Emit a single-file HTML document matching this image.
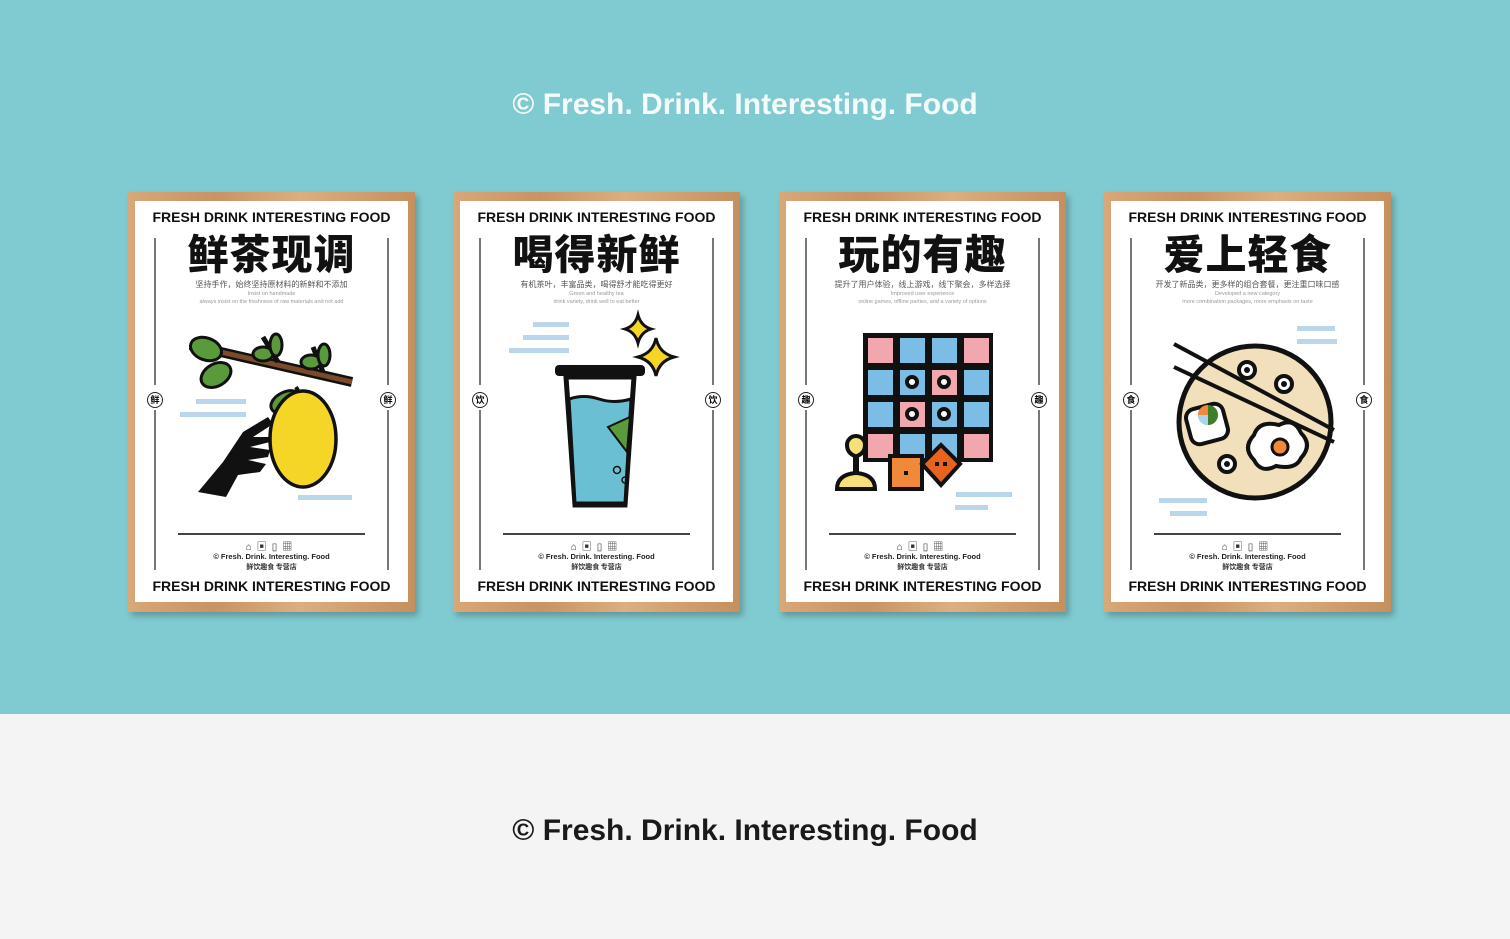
<!DOCTYPE html>
<html><head><meta charset="utf-8"><style>
*{margin:0;padding:0;box-sizing:border-box}
body{width:1510px;height:939px;overflow:hidden;background:#f4f4f4;font-family:"Liberation Sans","Noto Sans CJK SC",sans-serif;position:relative}
.top{position:absolute;left:0;top:0;width:1510px;height:714px;background:#80cbd1}
.h{position:absolute;left:0;width:1490px;text-align:center;font-size:30px;font-weight:bold;letter-spacing:0px}
.poster{position:absolute;top:192px;width:287px;height:420px;background:linear-gradient(90deg,#d9a878,#c99363 30%,#dcae80 60%,#c68f5e);box-shadow:3px 4px 6px rgba(0,0,0,.25)}
.in{position:absolute;left:7px;top:9px;right:7px;bottom:10px;background:#fff}
.poster>*{position:absolute}
.t{left:0;width:287px;text-align:center;font-weight:bold;font-size:14px;color:#111;white-space:nowrap}
.big{left:0;width:287px;text-align:center;font-weight:900;font-size:41px;line-height:48px;color:#111;top:35px;letter-spacing:1px;font-family:"Noto Sans CJK SC",sans-serif}
.s{left:0;width:287px;text-align:center;font-size:8px;color:#555;white-space:nowrap;font-family:"Noto Sans CJK SC",sans-serif}
.s2{left:0;width:287px;text-align:center;font-size:5.5px;color:#999;white-space:nowrap}
.vl{width:2px;background:#777}
.c{width:16px;height:16px;border:1.5px solid #222;border-radius:50%;font-size:9px;text-align:center;line-height:13px;font-weight:bold;font-family:"Noto Sans CJK SC",sans-serif;background:#fff}
.hl{height:1.5px;background:#444;left:50px;width:187px;top:341px}
.ic{left:0;width:287px;top:346px;text-align:center;font-size:10px;color:#333;letter-spacing:5px}
.f{left:0;width:287px;text-align:center;font-size:7.5px;font-weight:bold;top:360px;color:#222}
.f2{left:0;width:287px;text-align:center;font-size:7px;font-weight:bold;top:370px;color:#333;font-family:"Noto Sans CJK SC",sans-serif}
svg.il{left:0;top:0}
</style></head><body>
<div class="top"></div>
<div class="h" style="top:88px;color:#f4fbfb">© Fresh. Drink. Interesting. Food</div>
<div class="h" style="top:814px;color:#1a1a1a">© Fresh. Drink. Interesting. Food</div>

<div class="poster" style="left:128px">
<div class="in"></div>
<div class="t" style="top:17px">FRESH DRINK INTERESTING FOOD</div>
<div class="big">鲜茶现调</div>
<div class="s" style="top:87px">坚持手作，始终坚持原材料的新鲜和不添加</div>
<div class="s2" style="top:99px">Insist on handmade</div>
<div class="s2" style="top:107px">always insist on the freshness of raw materials and not add</div>
<div class="vl" style="left:26px;top:46px;height:147px"></div><div class="vl" style="left:26px;top:218px;height:160px"></div>
<div class="vl" style="left:259px;top:46px;height:147px"></div><div class="vl" style="left:259px;top:218px;height:160px"></div>
<div class="c" style="left:19px;top:200px">鲜</div><div class="c" style="left:252px;top:200px">鲜</div>
<svg class="il" width="287" height="420">
<line x1="62" y1="153" x2="224" y2="190" stroke="#111" stroke-width="10"/>
<line x1="62" y1="153" x2="224" y2="190" stroke="#7b4a28" stroke-width="5"/>
<line x1="135" y1="145" x2="150" y2="170" stroke="#111" stroke-width="5"/>
<line x1="185" y1="155" x2="195" y2="180" stroke="#111" stroke-width="5"/>
<g fill="#5b9a3a" stroke="#111" stroke-width="3">
<ellipse cx="78" cy="157" rx="16" ry="11" transform="rotate(20 78 157)"/>
<ellipse cx="88" cy="183" rx="16" ry="11" transform="rotate(-30 88 183)"/>
<ellipse cx="135" cy="162" rx="10" ry="7"/><ellipse cx="148" cy="153" rx="6" ry="11"/>
<ellipse cx="183" cy="170" rx="10" ry="7"/><ellipse cx="196" cy="163" rx="6" ry="11"/>
<ellipse cx="158" cy="210" rx="16" ry="10" transform="rotate(-25 158 210)"/>
</g>
<path d="M168 195 q6 10 5 18" stroke="#111" stroke-width="4" fill="none"/>
<ellipse cx="175" cy="247" rx="33" ry="48" fill="#f5d626" stroke="#111" stroke-width="3.5"/>
<path d="M70 300 L95 270 L115 240 L140 225 L145 232 L125 245 L142 245 L142 250 L122 255 L142 258 L140 265 L120 268 L138 272 L132 280 L110 283 L98 305 Z" fill="#111"/>
<g fill="#b9d6ea"><rect x="68" y="207" width="50" height="5"/><rect x="52" y="220" width="66" height="5"/><rect x="170" y="303" width="54" height="5"/></g>
</svg>
<div class="hl"></div>
<div class="ic">⌂▣▯▦</div>
<div class="f">© Fresh. Drink. Interesting. Food</div>
<div class="f2">鲜饮趣食 专营店</div>
<div class="t" style="top:386px">FRESH DRINK INTERESTING FOOD</div>
</div>

<div class="poster" style="left:453px">
<div class="in"></div>
<div class="t" style="top:17px">FRESH DRINK INTERESTING FOOD</div>
<div class="big">喝得新鲜</div>
<div class="s" style="top:87px">有机茶叶，丰富品类，喝得舒才能吃得更好</div>
<div class="s2" style="top:99px">Green and healthy tea</div>
<div class="s2" style="top:107px">drink variety, drink well to eat better</div>
<div class="vl" style="left:26px;top:46px;height:147px"></div><div class="vl" style="left:26px;top:218px;height:160px"></div>
<div class="vl" style="left:259px;top:46px;height:147px"></div><div class="vl" style="left:259px;top:218px;height:160px"></div>
<div class="c" style="left:19px;top:200px">饮</div><div class="c" style="left:252px;top:200px">饮</div>
<svg class="il" width="287" height="420">
<g fill="#b9d6ea"><rect x="80" y="130" width="36" height="5"/><rect x="70" y="143" width="46" height="5"/><rect x="56" y="156" width="60" height="5"/></g>
<path d="M113 185 L181 185 L172 313 L122 313 Z" fill="#fff" stroke="#111" stroke-width="5"/>
<path d="M116 207 q15 -5 30 0 t32 0 L172 311 L122 311 Z" fill="#6bbfd2" stroke="#111" stroke-width="3"/>
<rect x="102" y="173" width="90" height="11" rx="4" fill="#111"/>
<path d="M155 235 l22 -10 l-3 35 z" fill="#5b9a3a" stroke="#111" stroke-width="2"/>
<circle cx="164" cy="278" r="3.5" fill="none" stroke="#111" stroke-width="1.5"/><circle cx="172" cy="288" r="3" fill="none" stroke="#111" stroke-width="1.5"/>
<path d="M185 123 q3 11 13 14 q-10 3 -13 14 q-3 -11 -13 -14 q10 -3 13 -14z" fill="#f5d626" stroke="#111" stroke-width="3"/>
<path d="M203 146 q3 15 18 19 q-15 4 -18 19 q-3 -15 -18 -19 q15 -4 18 -19z" fill="#f5d626" stroke="#111" stroke-width="3"/>
</svg>
<div class="hl"></div>
<div class="ic">⌂▣▯▦</div>
<div class="f">© Fresh. Drink. Interesting. Food</div>
<div class="f2">鲜饮趣食 专营店</div>
<div class="t" style="top:386px">FRESH DRINK INTERESTING FOOD</div>
</div>

<div class="poster" style="left:779px">
<div class="in"></div>
<div class="t" style="top:17px">FRESH DRINK INTERESTING FOOD</div>
<div class="big">玩的有趣</div>
<div class="s" style="top:87px">提升了用户体验，线上游戏，线下聚会，多样选择</div>
<div class="s2" style="top:99px">Improved user experience</div>
<div class="s2" style="top:107px">online games, offline parties, and a variety of options</div>
<div class="vl" style="left:26px;top:46px;height:147px"></div><div class="vl" style="left:26px;top:218px;height:160px"></div>
<div class="vl" style="left:259px;top:46px;height:147px"></div><div class="vl" style="left:259px;top:218px;height:160px"></div>
<div class="c" style="left:19px;top:200px">趣</div><div class="c" style="left:252px;top:200px">趣</div>
<svg class="il" width="287" height="420">
<rect x="84" y="141" width="130" height="129" fill="#111"/>
<g>
<rect x="89" y="146" width="25" height="25" fill="#f0a8ae"/><rect x="121" y="146" width="25" height="25" fill="#7cbde6"/><rect x="153" y="146" width="25" height="25" fill="#7cbde6"/><rect x="185" y="146" width="25" height="25" fill="#f0a8ae"/>
<rect x="89" y="178" width="25" height="25" fill="#7cbde6"/><rect x="121" y="178" width="25" height="25" fill="#7cbde6"/><rect x="153" y="178" width="25" height="25" fill="#f0a8ae"/><rect x="185" y="178" width="25" height="25" fill="#7cbde6"/>
<rect x="89" y="210" width="25" height="25" fill="#7cbde6"/><rect x="121" y="210" width="25" height="25" fill="#f0a8ae"/><rect x="153" y="210" width="25" height="25" fill="#7cbde6"/><rect x="185" y="210" width="25" height="25" fill="#7cbde6"/>
<rect x="89" y="242" width="25" height="24" fill="#f0a8ae"/><rect x="121" y="242" width="25" height="24" fill="#7cbde6"/><rect x="153" y="242" width="25" height="24" fill="#7cbde6"/><rect x="185" y="242" width="25" height="24" fill="#f0a8ae"/>
</g>
<g fill="#fff" stroke="#111" stroke-width="4"><circle cx="133" cy="190" r="5"/><circle cx="165" cy="190" r="5"/><circle cx="133" cy="222" r="5"/><circle cx="165" cy="222" r="5"/></g>
<path d="M58 297 q0 -14 18 -16 l0 -17 q-8 -3 -8 -11 a9 9 0 1 1 18 0 q0 8 -8 11 l0 17 q18 2 18 16z" fill="#f5e07a" stroke="#111" stroke-width="4"/>
<rect x="111" y="264" width="32" height="33" fill="#f08a3a" stroke="#111" stroke-width="4"/><rect x="125" y="279" width="4" height="4" fill="#111"/>
<path d="M162 253 L181 272 L162 293 L143 272Z" fill="#e8641e" stroke="#111" stroke-width="4"/><rect x="156" y="270" width="4" height="4" fill="#111"/><rect x="164" y="270" width="4" height="4" fill="#111"/>
<g fill="#b9d6ea"><rect x="177" y="300" width="56" height="5"/><rect x="176" y="313" width="33" height="5"/></g>
</svg>
<div class="hl"></div>
<div class="ic">⌂▣▯▦</div>
<div class="f">© Fresh. Drink. Interesting. Food</div>
<div class="f2">鲜饮趣食 专营店</div>
<div class="t" style="top:386px">FRESH DRINK INTERESTING FOOD</div>
</div>

<div class="poster" style="left:1104px">
<div class="in"></div>
<div class="t" style="top:17px">FRESH DRINK INTERESTING FOOD</div>
<div class="big">爱上轻食</div>
<div class="s" style="top:87px">开发了新品类，更多样的组合套餐，更注重口味口感</div>
<div class="s2" style="top:99px">Developed a new category</div>
<div class="s2" style="top:107px">more combination packages, more emphasis on taste</div>
<div class="vl" style="left:26px;top:46px;height:147px"></div><div class="vl" style="left:26px;top:218px;height:160px"></div>
<div class="vl" style="left:259px;top:46px;height:147px"></div><div class="vl" style="left:259px;top:218px;height:160px"></div>
<div class="c" style="left:19px;top:200px">食</div><div class="c" style="left:252px;top:200px">食</div>
<svg class="il" width="287" height="420">
<g fill="#b9d6ea"><rect x="193" y="134" width="38" height="5"/><rect x="193" y="147" width="40" height="5"/><rect x="55" y="306" width="48" height="5"/><rect x="66" y="319" width="37" height="5"/></g>
<circle cx="151" cy="230" r="76" fill="#f2dfbb" stroke="#111" stroke-width="5"/>
<g fill="#fff" stroke="#111" stroke-width="4"><circle cx="143" cy="178" r="8"/><circle cx="180" cy="192" r="8"/><circle cx="123" cy="272" r="8"/></g>
<g fill="#111"><circle cx="143" cy="178" r="3"/><circle cx="180" cy="192" r="3"/><circle cx="123" cy="272" r="3"/></g>
<rect x="84" y="214" width="38" height="36" rx="9" fill="#fff" stroke="#111" stroke-width="4" transform="rotate(-15 103 232)"/>
<circle cx="104" cy="223" r="10" fill="#3f7d2a"/><path d="M104 223 L104 213 A10 10 0 0 0 94 223Z" fill="#f08a3a"/><path d="M104 223 L94 223 A10 10 0 0 0 104 233Z" fill="#a8d4ec"/>
<path d="M150 243 q5 -15 25 -10 q15 -8 22 8 q12 12 0 25 q-5 12 -25 8 q-15 8 -22 -6 q-12 -12 0 -25z" fill="#fff" stroke="#111" stroke-width="4"/>
<circle cx="176" cy="255" r="8" fill="#f08a3a" stroke="#111" stroke-width="3"/>
<line x1="70" y1="152" x2="230" y2="238" stroke="#111" stroke-width="4"/>
<line x1="70" y1="175" x2="230" y2="250" stroke="#111" stroke-width="4"/>
</svg>
<div class="hl"></div>
<div class="ic">⌂▣▯▦</div>
<div class="f">© Fresh. Drink. Interesting. Food</div>
<div class="f2">鲜饮趣食 专营店</div>
<div class="t" style="top:386px">FRESH DRINK INTERESTING FOOD</div>
</div>
</body></html>
